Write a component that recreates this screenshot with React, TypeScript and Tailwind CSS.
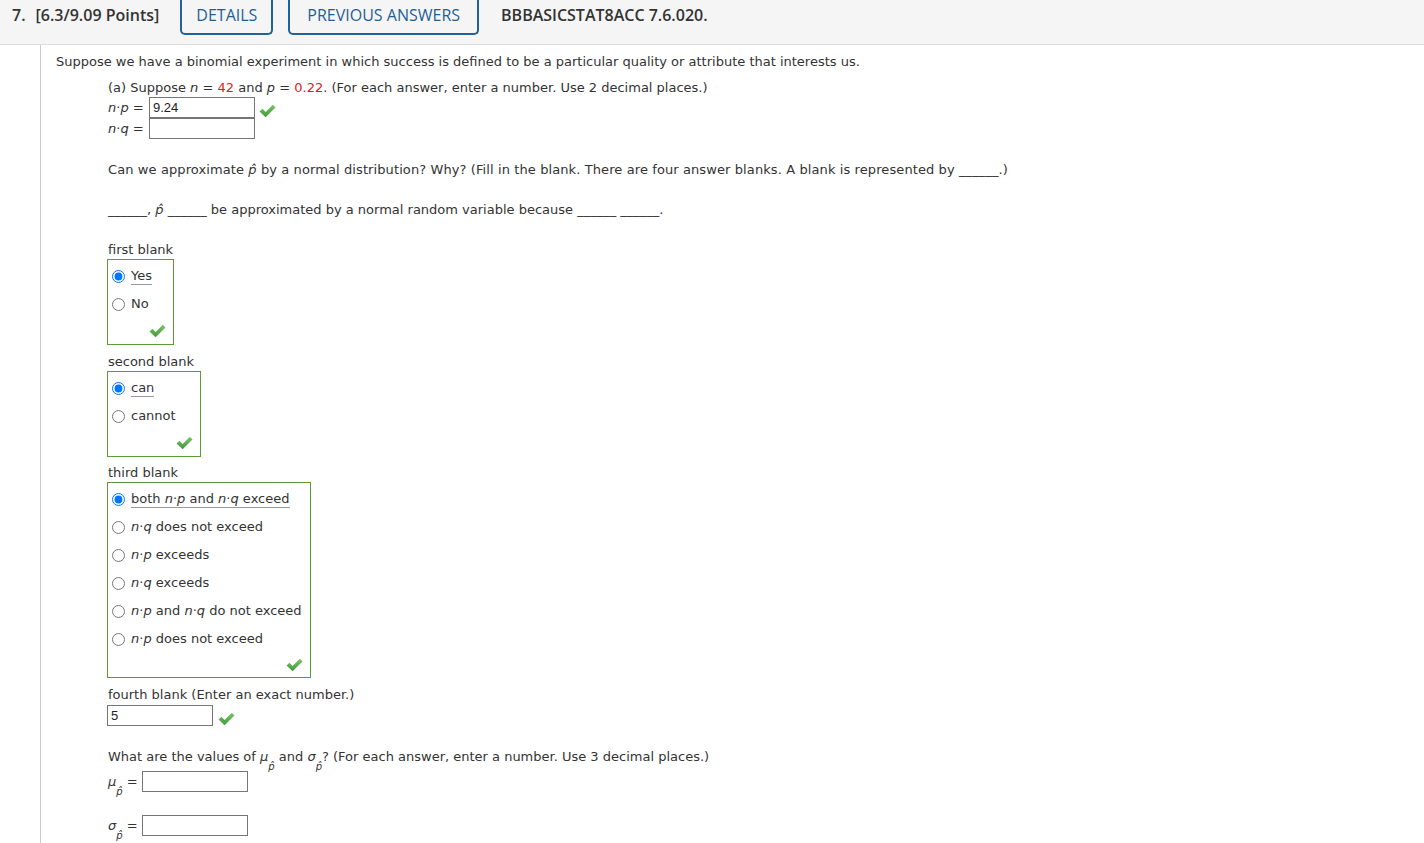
import React from "react";

const Check = () => (
  <svg width="17" height="14" viewBox="0 0 17 14" className="inline-block">
    <defs>
      <linearGradient id="chk" x1="0" y1="0" x2="0" y2="1">
        <stop offset="0" stopColor="#7fc36b" />
        <stop offset="1" stopColor="#3e9a3a" />
      </linearGradient>
    </defs>
    <path d="M0.5 7.5 L3.5 4.8 L6.6 8 L13.8 0.8 L16.5 3.5 L6.6 13.3 Z" fill="url(#chk)" />
  </svg>
);

// italic math letters
const M = ({ children }: { children: React.ReactNode }) => <span className="italic">{children}</span>;
const PHat = () => <span className="italic">p&#770;</span>;

const Sub = ({ sym }: { sym: string }) => (
  <span className="whitespace-nowrap">
    <span className="italic">{sym}</span>
    <span className="relative top-[9px] text-[10px] italic">p&#770;</span>
  </span>
);

type Opt = { label: React.ReactNode; on?: boolean };

function ChoiceBox({
  title,
  options,
  width,
  checkH,
  gap,
}: {
  title: string;
  options: Opt[];
  width: string;
  checkH: string;
  gap: string;
}) {
  return (
    <div className={"flex flex-col " + gap}>
      <div className="h-[18px] leading-[18px]">{title}</div>
      <div className={"-ml-[1px] flex flex-col border border-[#5b9b35] pt-[2px] pr-[7px] " + width}>
        {options.map((o, i) => (
          <label key={i} className="flex h-[28px] items-center">
            <input
              type="radio"
              readOnly
              checked={!!o.on}
              className="m-0 ml-[4px] h-[13px] w-[13px] accent-[#0075ff]"
            />
            <span className={"ml-[6px] whitespace-nowrap leading-[16px] " + (o.on ? "border-b border-[#999]" : "")}>
              {o.label}
            </span>
          </label>
        ))}
        <div className={"flex items-center justify-end " + checkH}>
          <Check />
        </div>
      </div>
    </div>
  );
}

export default function App() {
  const np = (
    <>
      <M>n</M>·<M>p</M>
    </>
  );
  const nq = (
    <>
      <M>n</M>·<M>q</M>
    </>
  );

  return (
    <div className="min-h-screen bg-white font-['DejaVu_Sans',Verdana,sans-serif] text-[13px] text-[#333]">
      {/* question header */}
      <div className="flex h-[45px] items-start border-b border-[#ddd] bg-[#f5f5f5] pl-[12px] font-['Open_Sans',sans-serif] text-[16px] font-semibold">
        <div className="flex h-[30px] items-center">
          <span>7.</span>
          <span className="ml-[10px]">[6.3/9.09 Points]</span>
        </div>
        <div className="ml-[21px] flex h-[35px] items-center rounded-b-[5px] border-2 border-t-0 border-[#1f6398] px-[14px] pb-[4px] font-normal text-[#1f5f96]">
          DETAILS
        </div>
        <div className="ml-[15px] flex h-[35px] items-center rounded-b-[5px] border-2 border-t-0 border-[#1f6398] px-[17px] pb-[4px] font-normal text-[#1f5f96]">
          PREVIOUS ANSWERS
        </div>
        <div className="ml-[22px] flex h-[30px] items-center">BBBASICSTAT8ACC 7.6.020.</div>
      </div>

      <div className="flex">
        <div className="w-[40px] shrink-0" />
        <div className="min-h-[798px] flex-1 border-l border-[#ccc] pl-[15px] pt-[8px]">
          <div className="h-[18px] leading-[18px]">
            Suppose we have a binomial experiment in which success is defined to be a particular quality or attribute that interests us.
          </div>

          <div className="ml-[52px] flex flex-col">
            <div className="mt-[8px] h-[18px] leading-[18px]">
              (a) Suppose <M>n</M> = <span className="text-[#e4181c]">42</span> and <M>p</M> ={" "}
              <span className="text-[#e4181c]">0.22</span>. (For each answer, enter a number. Use 2 decimal places.)
            </div>
            <div className="flex h-[21px] items-center">
              <span className="w-[41px] whitespace-nowrap">{np} =</span>
              <div className="flex h-[21px] w-[106px] items-center border border-[#767676] px-[3px] font-['Liberation_Sans',Arial,sans-serif] text-[13px] text-[#222]">
                9.24
              </div>
              <span className="ml-[4px] mt-[6px]">
                <Check />
              </span>
            </div>
            <div className="flex h-[21px] items-center">
              <span className="w-[41px] whitespace-nowrap">{nq} =</span>
              <div className="h-[21px] w-[106px] border border-[#767676]" />
            </div>

            <div className="mt-[22px] h-[18px] leading-[18px] tracking-[0.1px]">
              Can we approximate <PHat /> by a normal distribution? Why? (Fill in the blank. There are four answer blanks. A blank is represented by ______.)
            </div>
            <div className="mt-[22px] h-[18px] leading-[18px]">
              ______, <PHat /> ______ be approximated by a normal random variable because ______ ______.
            </div>

            <ChoiceBox
              title="first blank"
              gap="mt-[22px]"
              width="w-[67px]"
              checkH="h-[26px]"
              options={[{ label: "Yes", on: true }, { label: "No" }]}
            />
            <ChoiceBox
              title="second blank"
              gap="mt-[8px]"
              width="w-[94px]"
              checkH="h-[26px]"
              options={[{ label: "can", on: true }, { label: "cannot" }]}
            />
            <ChoiceBox
              title="third blank"
              gap="mt-[7px]"
              width="w-[204px]"
              checkH="h-[24px]"
              options={[
                { label: <>both {np} and {nq} exceed</>, on: true },
                { label: <>{nq} does not exceed</> },
                { label: <>{np} exceeds</> },
                { label: <>{nq} exceeds</> },
                { label: <>{np} and {nq} do not exceed</> },
                { label: <>{np} does not exceed</> },
              ]}
            />

            <div className="mt-[8px] h-[18px] leading-[18px]">fourth blank (Enter an exact number.)</div>
            <div className="mt-[1px] flex h-[21px] items-center">
              <div className="-ml-[1px] flex h-[21px] w-[106px] items-center border border-[#767676] px-[3px] font-['Liberation_Sans',Arial,sans-serif] text-[13px] text-[#222]">
                5
              </div>
              <span className="ml-[5px] mt-[6px]">
                <Check />
              </span>
            </div>

            <div className="mt-[22px] h-[18px] leading-[18px]">
              What are the values of <Sub sym="μ" /> and <Sub sym="σ" />? (For each answer, enter a number. Use 3 decimal places.)
            </div>
            <div className="mt-[5px] flex h-[21px] items-center">
              <span className="w-[34px] whitespace-nowrap">
                <Sub sym="μ" /> =
              </span>
              <div className="h-[21px] w-[106px] border border-[#767676]" />
            </div>
            <div className="mt-[23px] flex h-[21px] items-center">
              <span className="w-[34px] whitespace-nowrap">
                <Sub sym="σ" /> =
              </span>
              <div className="h-[21px] w-[106px] border border-[#767676]" />
            </div>
          </div>
        </div>
      </div>
    </div>
  );
}
